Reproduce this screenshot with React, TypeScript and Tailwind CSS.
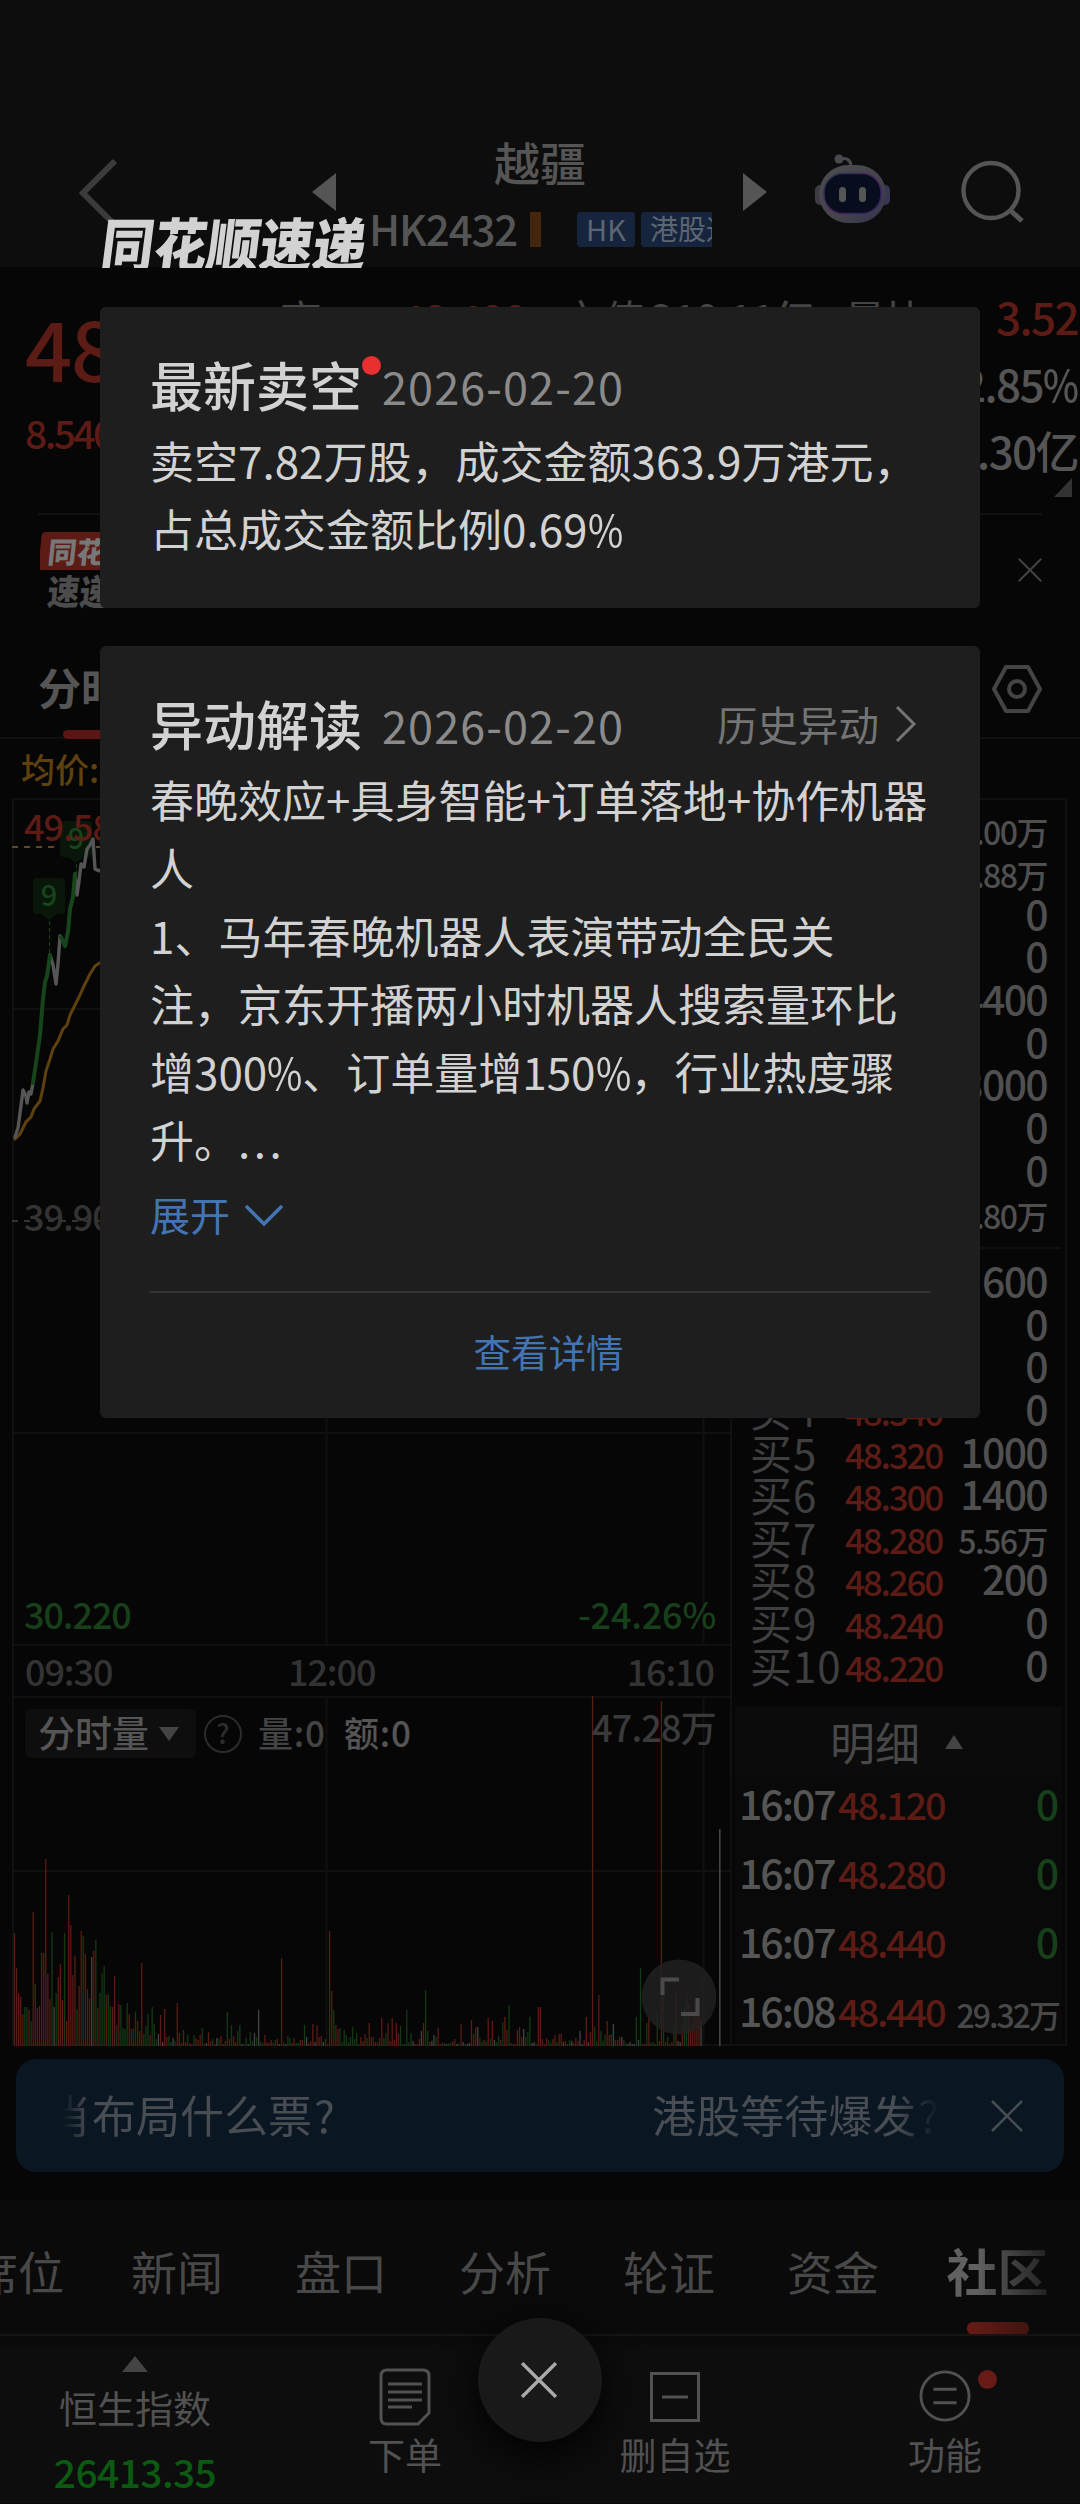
import { ReactNode } from 'react'
import clsx from 'clsx'

const sells = [
  { label: '卖10', price: '48.620', qty: '3.00万', small: true },
  { label: '卖9', price: '48.600', qty: '1.88万', small: true },
  { label: '卖8', price: '48.580', qty: '0' },
  { label: '卖7', price: '48.560', qty: '0' },
  { label: '卖6', price: '48.540', qty: '4400' },
  { label: '卖5', price: '48.520', qty: '0' },
  { label: '卖4', price: '48.500', qty: '3000' },
  { label: '卖3', price: '48.480', qty: '0' },
  { label: '卖2', price: '48.460', qty: '0' },
  { label: '卖1', price: '48.440', qty: '1.80万', small: true },
]

const buys = [
  { label: '买1', price: '48.400', qty: '600' },
  { label: '买2', price: '48.380', qty: '0' },
  { label: '买3', price: '48.360', qty: '0' },
  { label: '买4', price: '48.340', qty: '0' },
  { label: '买5', price: '48.320', qty: '1000' },
  { label: '买6', price: '48.300', qty: '1400' },
  { label: '买7', price: '48.280', qty: '5.56万', small: true },
  { label: '买8', price: '48.260', qty: '200' },
  { label: '买9', price: '48.240', qty: '0' },
  { label: '买10', price: '48.220', qty: '0' },
]

const trades = [
  { time: '16:07', price: '48.120', qty: '0' },
  { time: '16:07', price: '48.280', qty: '0' },
  { time: '16:07', price: '48.440', qty: '0' },
  { time: '16:08', price: '48.440', qty: '29.32万' },
]

const tabs = ['席位', '新闻', '盘口', '分析', '轮证', '资金']

// One entry per minute: direction (r up, g down, w flat) and bar height
const volumes =
  'r113 r78 r53 r49 r32 g39 g39 r36 g25 r134 r62 r38 r40 r93 r93 r187 r72 r47 g114 w39 g53 r69 r82 r46 g113 r25 r151 r121 r71 r90 g37 r60 r115 g110 r92 r57 r48 w89 r95 g106 r38 g53 g73 g80 r51 g52 g40 r39 r70 g21 r42 g41 g18 g17 g43 r32 r17 g18 g34 r25 r15 r83 g12 g20 g32 r11 g39 g22 g7 w12 r31 w4 r37 r9 g10 g4 w8 g5 r43 r13 r3 r16 r4 g11 r3 w1 g11 r8 r6 r11 g18 r2 w3 r14 r5 g7 r2 w8 g7 r10 r2 r5 g34 r7 g21 r10 r4 g15 g21 w2 g2 g8 w2 g14 g5 w13 g9 w36 g4 g3 r11 r4 r3 r6 r3 g6 r7 w2 r88 g4 w2 g10 g8 r3 r8 g3 g3 r6 r6 g21 w9 r3 r5 r22 w4 r21 r9 r10 w4 g7 g2 r115 r55 g36 r21 r17 g18 g4 g16 g11 g4 g9 g19 g7 g13 g2 r9 r5 r12 g8 r23 ' +
  'r9 g9 r4 r4 r8 r28 g8 g13 r23 r5 r28 r6 r23 r12 g20 g2 g2 g36 g4 g13 w5 r2 r2 r7 w15 r23 g56 g15 r4 w5 w11 g9 r18 r2 r3 g3 w2 g3 g3 r5 r7 w2 g3 r22 w4 g2 w2 w3 r26 r12 r19 w19 g8 g4 r6 g5 r28 g7 r25 w6 g4 g10 r6 g24 r29 r16 g41 r3 g2 r2 r16 r19 r9 w17 g9 g14 g29 w3 w4 g2 r39 r39 r7 r2 r8 g6 g3 r7 r11 g4 r12 r12 w4 r5 r2 g6 w5 r3 r8 r5 w15 w2 r6 r29 w4 r14 ' +
  'r350 g19 g5 r51 g15 g5 g11 r25 r11 r12 w22 r6 r6 r9 w9 g6 g3 w2 w4 w2 w2 g29 w6 g78 r2 r2 g23 r28 g3 g4 r2 g35 r5 r345 g54 r4 g9 r2 r4 g20 r55 w5 w4 r21 g37 g53 r42 r20 r27 r47 r37 r45 w27'

const barColor: Record<string, string> = { r: '#5a1c14', g: '#143a14', w: '#444444' }

function Cross({ className }: { className: string }) {
  return (
    <svg viewBox="0 0 32 32" className={className} fill="none" stroke="currentColor">
      <path d="M1 1L31 31M31 1L1 31" />
    </svg>
  )
}

function Header() {
  return (
    <header className="h-[267px] bg-[#0d0d0d] flex text-[#555]">
      <svg viewBox="0 0 40 76" className="w-10 h-[76px] ml-[79px] mt-[158px] shrink-0" fill="none" stroke="#3b3b3b" strokeWidth="6">
        <path d="M36 3L4 35L36 67" />
      </svg>
      <svg viewBox="0 0 24 38" className="w-6 h-[38px] ml-[193px] mt-[173px] shrink-0" fill="#555">
        <path d="M24 0V38L0 19Z" />
      </svg>
      <div className="w-[376px] ml-4 mr-[15px] pt-[131px] shrink-0 flex flex-col items-center">
        <div className="text-[46px] leading-[60px] font-medium">越疆</div>
        <div className="w-full mt-[21px] pl-[17px] flex items-center h-[35px]">
          <span className="text-[42px] font-medium tracking-[-1.1px] w-[161px] leading-none relative top-[-2px]">HK2432</span>
          <span className="w-[11px] h-[35px] bg-[#44260f]" />
          <span className="ml-9 w-[58px] h-[35px] rounded-[3px] bg-[#16243d] text-[#5c6672] text-[29px] leading-[32px] text-center">HK</span>
          <span className="ml-1.5 w-[71px] h-[35px] rounded-l-[3px] bg-[#16243d] text-[#5c6672] text-[28px] leading-[32px] pl-[9px] overflow-hidden whitespace-nowrap">港股通</span>
        </div>
      </div>
      <svg viewBox="0 0 24 38" className="w-6 h-[38px] mt-[173px] shrink-0" fill="#555">
        <path d="M0 0V38L24 19Z" />
      </svg>
      <svg viewBox="0 0 76 72" className="w-[76px] h-[72px] ml-[48px] mt-[153px] shrink-0">
        <defs>
          <linearGradient id="shell" x1="0" y1="0" x2="1" y2="1">
            <stop offset="0" stopColor="#4c4c50" />
            <stop offset="0.6" stopColor="#434349" />
            <stop offset="1" stopColor="#34324f" />
          </linearGradient>
          <linearGradient id="visor" x1="0" y1="0" x2="1" y2="1">
            <stop offset="0" stopColor="#1d3a4a" />
            <stop offset="0.5" stopColor="#4a2160" />
            <stop offset="1" stopColor="#2a2560" />
          </linearGradient>
        </defs>
        <path d="M25 6C33 4 36 8 36 14" fill="none" stroke="#48484d" strokeWidth="3" />
        <circle cx="24" cy="6" r="4.5" fill="#48484d" />
        <rect x="0" y="32" width="10" height="20" rx="5" fill="#3c3c42" />
        <rect x="65" y="32" width="10" height="20" rx="5" fill="#38364e" />
        <rect x="4" y="12" width="67" height="58" rx="29" fill="url(#shell)" />
        <rect x="9" y="20.5" width="57" height="40" rx="19" fill="#080d1d" stroke="url(#visor)" strokeWidth="1.5" />
        <rect x="24" y="34" width="7" height="15" rx="3.5" fill="#555" />
        <rect x="44" y="34" width="7" height="15" rx="3.5" fill="#555" />
      </svg>
      <svg viewBox="0 0 64 64" className="w-16 h-16 ml-[70px] mt-[160px] shrink-0" fill="none" stroke="#555" strokeWidth="4.4">
        <circle cx="30" cy="30.5" r="27.5" />
        <path d="M49 50L61 61" strokeWidth="5" />
      </svg>
    </header>
  )
}

// The percent sign is drawn narrower than the font's own
function Percent() {
  return <span className="inline-block w-[35px] origin-left scale-x-[0.87]">%</span>
}

function Quote() {
  return (
    <section className="h-[246px] flex justify-between overflow-hidden whitespace-nowrap">
      <div className="pl-[25px] w-[240px] text-[#5c1b15] font-medium">
        <div className="text-[83px] leading-[90px] mt-[34px] tracking-[-1.5px]">48.440</div>
        <div className="text-[39px] leading-[60px] mt-[11px] tracking-[-2.6px]">8.540 21.40%</div>
      </div>
      <div className="flex-1 pl-10 pt-[21px] flex text-[42px] leading-[60px] text-[#444]">
        <span className="w-[120px]">高</span>
        <span className="w-[161px] text-[#5c1b15] font-medium tracking-[-1px]">48.400</span>
        <span className="w-[89px]">市值</span>
        <span className="w-[194px] font-medium tracking-[-1.5px]">210.11亿</span>
        <span>量比</span>
      </div>
      <div className="w-[150px] flex flex-col items-end pr-0.5 text-[44px] text-[#555] font-medium tracking-[-1.6px]">
        <div className="leading-[67px] mt-[16px] text-[#5c1b15]">3.52</div>
        <div className="leading-[67px]">2.85<Percent /></div>
        <div className="leading-[67px]">0.30亿</div>
        <svg viewBox="0 0 18 19" className="w-[18px] h-[19px] -mt-1.5 mr-1.5" fill="#333">
          <path d="M18 0V19H0Z" />
        </svg>
      </div>
    </section>
  )
}

function ExpressBar() {
  return (
    <section className="mx-[38px] h-[113px] border-t-2 border-[#111] flex justify-between">
      <div className="ml-0.5 mt-[17px] w-[170px] h-[80px] overflow-hidden font-black text-[29px]">
        <div className="w-[150px] h-[38px] -skew-x-6 rounded bg-[#5c1b15] text-[#777] leading-[36px] pl-2">同花顺</div>
        <div className="text-[#4c4c4c] leading-[36px] pl-2 mt-0.5 text-[32px] -skew-x-6 scale-y-110">速递</div>
      </div>
      <Cross className="w-6 h-6 mt-[43px] text-[#444] stroke-[2.5]" />
    </section>
  )
}

function ChartTabs() {
  return (
    <section className="h-[100px] mt-[13px] border-b-2 border-[#0f0f0f] flex justify-between">
      <div className="pl-[38px] pt-[17px] text-[#555] text-[43px] leading-[60px] font-bold">
        分时
        <div className="w-[44px] h-[9px] ml-[25px] mt-[14px] rounded-full bg-[#5c1515]" />
      </div>
      <svg viewBox="0 0 52 50" className="w-[52px] h-[50px] mr-[37px] mt-[25px]" fill="none" stroke="#444" strokeWidth="4" strokeLinejoin="round">
        <path d="M15 3H37L49 25L37 47H15L3 25Z" />
        <circle cx="26" cy="25" r="8" />
      </svg>
    </section>
  )
}

function PriceChart() {
  return (
    <svg viewBox="12 798 718 898" className="w-[718px] h-[898px] block" fontSize="36" fontWeight="500">
      <g stroke="#101010" strokeWidth="2" fill="none">
        <path d="M13 1696V799H730M13 1009H730M13 1433H730M13 1645H730M326.5 799V1645M703.5 799V1645" />
      </g>
      <path d="M12 847H730" stroke="#5a4a2c" strokeWidth="2" strokeDasharray="6 6" />
      <path d="M12 1221H730" stroke="#333" strokeWidth="2" strokeDasharray="6 6" />
      <g fill="#09160a">
        <path d="M37 878H61Q65 878 65 882V910Q65 914 61 914H57L49 920L41 914H37Q33 914 33 910V882Q33 878 37 878Z" />
        <path d="M64 821H88Q92 821 92 825V853Q92 857 88 857H84L76 863L68 857H64Q60 857 60 853V825Q60 821 64 821Z" />
      </g>
      <g fill="#17451b" fontSize="29" textAnchor="middle">
        <text x="49" y="906">9</text>
        <text x="76" y="849">9</text>
      </g>
      <path d="M49.5 921V953M76.5 864V874" stroke="#17451b" strokeDasharray="4 3" />
      <text x="24" y="841" fill="#5c1b15" letterSpacing="-1">49.580</text>
      <text x="24" y="1231" fill="#333" letterSpacing="-1">39.900</text>
      <path d="M14 1140L20 1134L26 1122L31 1117L34 1109L40 1101L43 1088L46 1071L50 1059L53 1049L58 1041L63 1029L67 1025L70 1015L75 1005L79 997L84 986L90 974L95 966L104 960" stroke="#5f410f" strokeWidth="3" fill="none" />
      <g fill="none" strokeWidth="3.4" strokeLinejoin="round" strokeLinecap="round">
        <path d="M15 1137L18 1128L22 1098L23 1090L26 1096L27 1103L29 1092L31 1094L33 1083M50 955L53 965L56 984L58 964L60 936M75 874L77 895L79 881L81 864L84 867L87 849L90 845L93 839L95 869L97 870L104 872" stroke="#555" />
        <path d="M33 1083L36 1063L40 1035L43 999L45 982L47 976L50 955M61 937L65 946L68 932L70 909L73 897L75 874" stroke="#17451b" strokeWidth="4" />
      </g>
      <g>
        <text x="24" y="1629" fill="#17401a" letterSpacing="-1.1">30.220</text>
        <text x="716" y="1629" fill="#17401a" textAnchor="end" letterSpacing="-0.2">-24.26%</text>
        <g fill="#333" letterSpacing="-1.1">
          <text x="25" y="1686">09:30</text>
          <text x="288" y="1686">12:00</text>
          <text x="714" y="1686" textAnchor="end">16:10</text>
        </g>
      </g>
    </svg>
  )
}

function VolumeChart() {
  return (
    <div className="relative w-[718px] h-[350px]">
      <svg viewBox="12 1696 718 350" className="w-full h-full block">
        <path d="M13 2046V1697H730M13 1871H730M326.5 1697V2046M703.5 1697V2046M13 2045H730" stroke="#101010" strokeWidth="2" fill="none" />
        {volumes.split(' ').map((v, i) => (
          <rect key={i} x={13.8 + i * 2.087} y={2046 - Number(v.slice(1))} width="1.3" height={Number(v.slice(1))} fill={barColor[v[0]]} />
        ))}
        <rect x="719" y="1829" width="1.6" height="217" fill="#444" />
        <circle cx="679" cy="1997" r="37.5" fill="#222" fillOpacity="0.8" />
        <path d="M662.5 1995V1979.500H679M681 2014H697.500V1998" stroke="#4a4a4a" strokeWidth="4" fill="none" />
      </svg>
      {/* Indicator picker sits on top of the bars */}
      <div className="absolute top-[13px] left-[13px] right-[14px] flex items-center h-[49px] text-[35px] font-medium text-[#555]">
        <div className="w-[171px] h-[49px] rounded-md bg-[#0e0e0e] flex items-center pl-[13px]">
          <span className="text-[37px] leading-[49px] relative top-[-1px]">分时量</span>
          <svg viewBox="0 0 20 14" className="w-5 h-3.5 ml-2.5" fill="#444">
            <path d="M0 0H20L10 14Z" />
          </svg>
        </div>
        <div className="ml-2 w-[38px] h-[38px] rounded-full border-2 border-[#2c2c2c] text-[#2c2c2c] text-[27px] leading-[32px] text-center">?</div>
        <span className="ml-4 w-[86px] text-[#444] whitespace-nowrap relative top-[-1px] tracking-[0.8px]">量:0</span>
        <span className="relative top-[-1px] tracking-[0.8px]">额:0</span>
        <span className="ml-auto text-[36px] text-[#3a3a3a] relative top-[-8px] tracking-[-0.8px]">47.28万</span>
      </div>
    </div>
  )
}

function DepthRows({ rows }: { rows: { label: string; price: string; qty: string; small?: boolean }[] }) {
  return (
    <div>
      {rows.map((row) => (
        <div key={row.label} className="h-[42.67px] flex items-center pl-[18px] pr-[18px] whitespace-nowrap leading-[42px]">
          <span className="w-[95px] text-[42px] text-[#3f3f3f] tracking-[1px]">{row.label}</span>
          <span className="text-[35px] font-medium text-[#5c1b15] tracking-[-2.2px] relative top-0.5">{row.price}</span>
          <span className={clsx('ml-auto font-medium text-[#4f4f4f] relative', row.small ? 'text-[32px] tracking-[-1.5px] top-[3px]' : 'text-[41px] tracking-[-1.7px] top-[-2px]')}>{row.qty}</span>
        </div>
      ))}
    </div>
  )
}

function OrderBook() {
  return (
    <aside className="w-[337px] h-[1248px] border-2 border-[#101010]">
      <div className="pt-[7px]">
        <DepthRows rows={sells} />
        <div className="mt-[13px] mb-[11px] mx-1 border-t-2 border-[#101010]" />
        <DepthRows rows={buys} />
      </div>
      <div className="mt-[21px] mx-[3px] h-[336px] bg-[#090909]">
        <div className="h-[69px] bg-[#0b0b0b] flex items-center pl-[95px] text-[45px] text-[#484848] leading-[60px]">
          明细
          <svg viewBox="0 0 18 14" className="w-[18px] h-3.5 ml-[25px]" fill="#444">
            <path d="M9 0L18 14H0Z" />
          </svg>
        </div>
        {trades.map((t, i) => (
          <div key={i} className="h-[69px] flex items-center pl-[4px] pr-[3px] font-medium whitespace-nowrap relative top-[-8px]">
            <span className="w-[99px] text-[41px] text-[#555] tracking-[-2px]">{t.time}</span>
            <span className="text-[38px] text-[#5c1b15] tracking-[-2.2px] relative top-px">{t.price}</span>
            <span className={clsx('ml-auto', t.qty === '0' ? 'text-[41px] text-[#17401a]' : 'text-[32px] text-[#484848] tracking-[-2px] relative top-1')}>{t.qty}</span>
          </div>
        ))}
      </div>
    </aside>
  )
}

function AskBanner() {
  return (
    <section className="mx-4 mt-[13px] h-[113px] rounded-[20px] bg-[#0a1621] flex items-center text-[44px] leading-[60px] text-[#474d52] whitespace-nowrap">
      <div className="ml-[46px] w-[879px] overflow-hidden flex justify-between relative top-[-2px] [mask-image:linear-gradient(90deg,transparent,black_3%,black_95%,transparent)]">
        <span className="-ml-[14px]">肖布局什么票<span className="ml-0.5">?</span></span>
        <span className="mr-[2px]">港股等待爆发<span className="ml-0.5">?</span></span>
      </div>
      <Cross className="w-8 h-8 ml-[50px] text-[#474d52] stroke-[2.5]" />
    </section>
  )
}

function SectionTabs() {
  return (
    <nav className="mt-7 h-[136px] bg-[#0a0a0a] border-b-2 border-[#151515] overflow-hidden">
      <div className="-ml-[69px] flex w-[1150px] text-[46px] leading-[60px] text-[#484848] pt-[40px]">
        {tabs.map((tab) => (
          <span key={tab} className="w-[164px] shrink-0 text-center first:pl-2.5">{tab}</span>
        ))}
        <div className="w-[165px] shrink-0 flex flex-col items-center">
          <span className="text-[51px] font-bold text-transparent bg-clip-text bg-linear-to-r from-[#606060] from-30% to-[#222]">社区</span>
          <span className="mt-[22px] w-[62px] h-[13px] rounded-md bg-linear-to-r from-[#681b16] to-[#401410]" />
        </div>
      </div>
    </nav>
  )
}

function NavItem({ label, children }: { label: string; children: ReactNode }) {
  return (
    <div className="flex flex-col items-center w-[270px] pt-[31px]">
      {children}
      <span className="text-[37px] leading-[50px] mt-[3px]">{label}</span>
    </div>
  )
}

function BottomNav() {
  return (
    <footer className="h-[167px] bg-[#0d0d0d] border-t-[9px] border-[#0a0a0a] flex text-[#515151] relative">
      <div className="w-[270px] flex flex-col items-center pt-[11px]">
        <svg viewBox="0 0 26 16" className="w-[26px] h-4" fill="#444">
          <path d="M13 0L26 16H0Z" />
        </svg>
        <span className="text-[38px] leading-[50px] mt-[10px]">恒生指数</span>
        <span className="text-[39px] leading-[50px] mt-[14px] text-[#0c5a12] font-medium tracking-[-0.6px]">26413.35</span>
      </div>
      <NavItem label="下单">
        <svg viewBox="0 0 52 58" className="w-[52px] h-[58px] -mt-2" fill="none" stroke="currentColor" strokeWidth="3">
          <path d="M8 2H44Q50 2 50 8V45L39 56H8Q2 56 2 50V8Q2 2 8 2Z" />
          <path d="M9 16H43M9 24H43M9 32H43M9 39H33" />
        </svg>
      </NavItem>
      <NavItem label="删自选">
        <svg viewBox="0 0 50 50" className="w-[50px] h-[50px] -mt-1 mb-1" fill="none" stroke="currentColor" strokeWidth="3">
          <path d="M1.500 1.500H48.500V48.500H1.500ZM12 25H38" />
        </svg>
      </NavItem>
      <NavItem label="功能">
        <div className="relative -mt-1.5 mb-1">
          <svg viewBox="0 0 54 54" className="w-[54px] h-[52px]" fill="none" stroke="currentColor" strokeWidth="3">
            <circle cx="27" cy="27" r="25" />
            <path d="M15 20H39M15 34H39" />
          </svg>
          <span className="absolute left-[60px] top-0 w-[19px] h-[19px] rounded-full bg-[#681b16]" />
        </div>
      </NavItem>
    </footer>
  )
}

function CardTitle({ title, dot, extra }: { title: string; dot?: boolean; extra?: ReactNode }) {
  return (
    <div className="flex items-center h-[70px] leading-[70px]">
      <h2 className="text-[53px] font-medium w-[232px] relative">
        {title}
        {dot && <span className="absolute left-[212px] top-[7px] w-[19px] h-[19px] rounded-full bg-[#e93030]" />}
      </h2>
      <span className="text-[45px] text-[#8a8a8a] tracking-[1.1px] relative top-0.5">2026-02-20</span>
      {extra}
    </div>
  )
}

function NewsOverlay() {
  return (
    <div className="absolute inset-0 flex flex-col items-start pl-[100px] text-[#d2d2d2]">
      <div className="mt-[217px] h-[51px] overflow-hidden pr-4">
        <div className="text-[53px] leading-[51px] font-black -skew-x-8 scale-y-110 pl-0.5">同花顺速递</div>
      </div>

      <article className="mt-[39px] w-[880px] h-[301px] rounded-md bg-[#1e1e1e] pl-[50px] pt-[42px]">
        <CardTitle title="最新卖空" dot />
        <p className="text-[44px] leading-[68px] mt-[7px] whitespace-nowrap">
          卖空7.82万股，成交金额363.9万港元，
          <br />
          占总成交金额比例0.69<Percent />
        </p>
      </article>

      <article className="mt-[38px] w-[880px] h-[772px] rounded-md bg-[#1e1e1e] pl-[50px] pr-[50px] pt-[42px]">
        <CardTitle
          title="异动解读"
          extra={
            <span className="ml-auto mr-[13px] flex items-center text-[40.5px] text-[#747474] relative top-px">
              历史异动
              <svg viewBox="0 0 22 36" className="w-[22px] h-9 ml-4" fill="none" stroke="currentColor" strokeWidth="3">
                <path d="M2 1L19 18L2 35" />
              </svg>
            </span>
          }
        />
        <p className="text-[44px] leading-[68px] mt-[7px] whitespace-nowrap">
          春晚效应+具身智能+订单落地+协作机器
          <br />
          人
          <br />
          1、马年春晚机器人表演带动全民关
          <br />
          注，京东开播两小时机器人搜索量环比
          <br />
          增300<Percent />、订单量增150<Percent />，行业热度骤
          <br />
          升。<span className="tracking-[3.5px]">...</span>
        </p>
        <div className="flex items-center mt-[13px] h-[56px] leading-[56px] text-[40px] text-[#4375b5]">
          展开
          <svg viewBox="0 0 38 22" className="w-[38px] h-[22px] ml-[15px] mt-1" fill="none" stroke="currentColor" strokeWidth="3.5">
            <path d="M1 1L19 19L37 1" />
          </svg>
        </div>
        <div className="mt-[49px] h-[1.5px] bg-[#333]" />
        <div className="text-center text-[37.5px] leading-[60px] mt-[28px] pl-[17px] text-[#4375b5]">查看详情</div>
      </article>

      <button className="absolute left-[478px] top-[2318px] w-[124px] h-[124px] rounded-full bg-[#191919] shadow-[0_12px_40px_#000] flex items-center justify-center text-[#aaa]">
        <Cross className="w-9 h-9 stroke-[3] relative -left-px" />
      </button>
    </div>
  )
}

export default function App() {
  return (
    <div className="relative w-[1080px] h-[2504px] overflow-hidden bg-[#060606] font-['Noto_Sans_CJK_SC',sans-serif]">
      <Header />
      <Quote />
      <ExpressBar />
      <ChartTabs />
      <div className="h-[59px] pl-[21px] pt-1 text-[34px] leading-[52px] font-medium text-[#5f410f]">均价:47.256</div>
      <div className="flex pl-3">
        <div>
          <PriceChart />
          <VolumeChart />
        </div>
        <OrderBook />
      </div>
      <AskBanner />
      <SectionTabs />
      <BottomNav />
      <NewsOverlay />
    </div>
  )
}
